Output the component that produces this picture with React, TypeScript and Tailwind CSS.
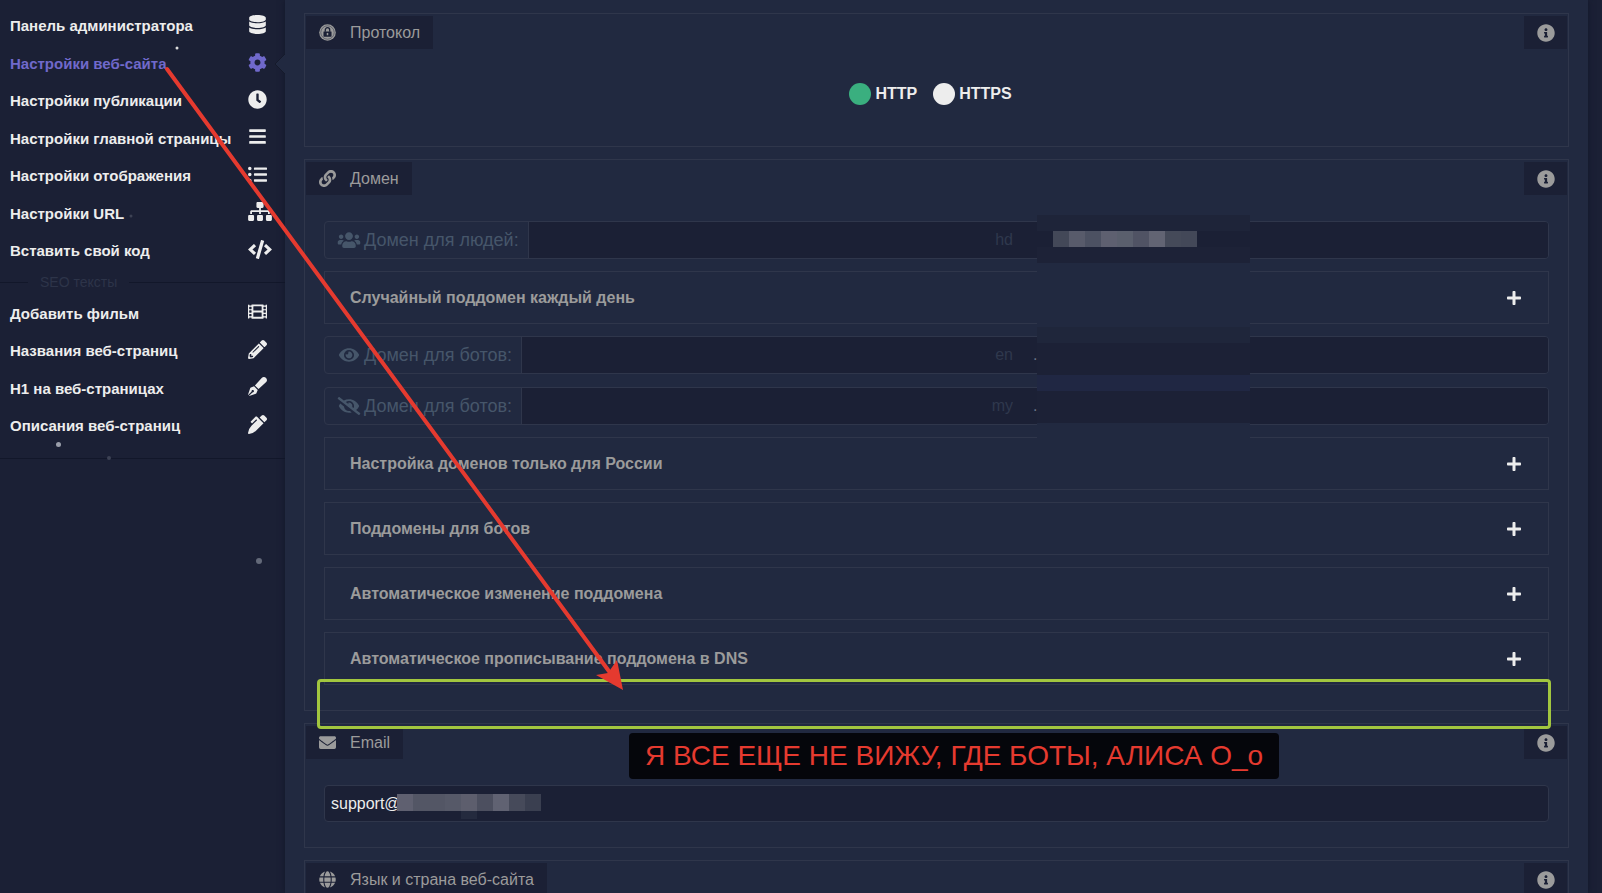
import React, { ReactNode } from "react";
import type { IconType } from "react-icons";
import {
  FaBars,
  FaClock,
  FaCode,
  FaCog,
  FaDatabase,
  FaEnvelope,
  FaEye,
  FaEyeSlash,
  FaFilm,
  FaGlobe,
  FaInfoCircle,
  FaLink,
  FaListUl,
  FaPenAlt,
  FaPenFancy,
  FaPencilAlt,
  FaPlus,
  FaSitemap,
  FaUsers,
} from "react-icons/fa";

type Item = { label: string; icon: IconType; wide?: boolean; active?: boolean };

const mainItems: Item[] = [
  { label: "Панель администратора", icon: FaDatabase },
  { label: "Настройки веб-сайта", icon: FaCog, active: true },
  { label: "Настройки публикации", icon: FaClock },
  { label: "Настройки главной страницы", icon: FaBars },
  { label: "Настройки отображения", icon: FaListUl },
  { label: "Настройки URL", icon: FaSitemap, wide: true },
  { label: "Вставить свой код", icon: FaCode, wide: true },
];

const seoItems: Item[] = [
  { label: "Добавить фильм", icon: FaFilm },
  { label: "Названия веб-страниц", icon: FaPencilAlt },
  { label: "H1 на веб-страницах", icon: FaPenFancy },
  { label: "Описания веб-страниц", icon: FaPenAlt },
];

function NavItem({ label, icon: Icon, wide, active }: Item) {
  return (
    <a
      href="#"
      className={`relative flex flex-1 items-center justify-between pl-[10px] pr-[13px] text-[15px] font-bold whitespace-nowrap ${
        active ? "text-[#7069cb]" : "text-[#ededed]"
      }`}
    >
      <span>{label}</span>
      <span className="mb-1 flex w-6 text-[19px]">
        <Icon className={wide ? "h-[19px] w-6" : "size-[19px]"} />
      </span>
      {active && (
        <svg className="absolute right-0 top-1/2 -mt-[10px] h-5 w-[10px]" viewBox="0 0 10 20">
          <path d="M10 0 0 10l10 10z" fill="#212940" />
          <path d="M10 0 0 10l10 10" fill="none" stroke="#151a2b" />
        </svg>
      )}
    </a>
  );
}

function LockBadge({ className }: { className?: string }) {
  return (
    <svg className={className} viewBox="0 0 16 16" fill="none">
      <circle cx="8" cy="8" r="7.8" fill="currentColor" />
      <circle cx="8" cy="8" r="6.3" stroke="#1b2035" strokeWidth=".4" />
      <path d="M5.9 7.2V5.6a2.1 2.1 0 0 1 4.2 0v1.6" stroke="#1b2035" strokeWidth="1.2" />
      <rect x="4.2" y="7" width="7.6" height="5" rx=".4" fill="#1b2035" />
      <path d="M8 8.4v2.2" stroke="currentColor" strokeWidth="1.4" />
    </svg>
  );
}

function Section({
  title,
  icon: Icon,
  children,
}: {
  title: string;
  icon: IconType | typeof LockBadge;
  children?: ReactNode;
}) {
  return (
    <section className="border border-[#2f364b] px-[1px] pt-[2px] pb-[25px]">
      <header className="flex h-[33px] justify-between text-[#9b9b9b]">
        <h2 className="flex items-center gap-[14px] bg-[#1b2035] pl-[13px] pr-[13px] text-[16px]">
          <Icon className="size-[17px]" />
          {title}
        </h2>
        <button type="button" aria-label="Информация" className="flex w-[43px] items-center justify-center bg-[#1b2035]">
          <FaInfoCircle className="size-[18px]" />
        </button>
      </header>
      <div className="px-[18px] pt-[26px]">{children}</div>
    </section>
  );
}

function DomainRow({ id, label, icon: Icon, prefix, dot }: { id: string; label: string; icon: IconType; prefix: string; dot?: boolean }) {
  return (
    <div className="flex h-[38px] overflow-hidden rounded-[4px] border border-[#2f364b]">
      <label htmlFor={id} className="flex items-center gap-[3px] border-r border-[#2f364b] pl-3 pr-[9px] text-[18px] whitespace-nowrap text-[#46566a]">
        <Icon className="h-[18px] w-6" />
        {label}
      </label>
      <div className="flex flex-1 items-center bg-[#1b2035] text-[16px] text-[#2f384d]">
        <input id={id} defaultValue={prefix} className="h-full min-w-0 flex-1 bg-transparent pr-5 text-right outline-none" />
        <span className="w-[515px] text-[#6b7385]">{dot ? "." : ""}</span>
      </div>
    </div>
  );
}

function Accordion({ title }: { title: string }) {
  return (
    <button type="button" className="flex h-[53px] w-full items-center justify-between border border-[#2f364b] pl-[25px] pr-[26px] text-left text-[16px] font-bold text-[#9b9b9b]">
      {title}
      <FaPlus className="size-4 text-[#ededed]" />
    </button>
  );
}

const domainMosaic = ["bg-[#434858]", "bg-[#585b6b]", "bg-[#4c5162]", "bg-[#5e6070]", "bg-[#5a5f6d]", "bg-[#505364]", "bg-[#626473]", "bg-[#454a59]", "bg-[#434858]"];
const emailMosaic = ["bg-[#5f6070]", "bg-[#535665]", "bg-[#535665]", "bg-[#565968]", "bg-[#5d5e6d]", "bg-[#4c4f5f]", "bg-[#606272]", "bg-[#464a5a]", "bg-[#3a3f50]"];

export default function App() {
  return (
    <div className="relative flex h-screen overflow-hidden bg-[#1b2035] font-['Liberation_Sans',Arial,sans-serif]">
      <aside className="w-[285px] shrink-0">
        <nav className="border-b border-[#12172a] pt-2 pb-[13px]">
          <div className="flex h-[262px] flex-col">
            {mainItems.map((i) => (
              <NavItem key={i.label} {...i} />
            ))}
          </div>
          <div className="flex h-[25px] items-center text-[14px] text-[#2d3449]">
            <span className="h-px w-7 bg-[#12172a]" />
            <span className="px-3">SEO тексты</span>
            <span className="h-px flex-1 bg-[#12172a]" />
          </div>
          <div className="flex h-[150px] flex-col">
            {seoItems.map((i) => (
              <NavItem key={i.label} {...i} />
            ))}
          </div>
        </nav>
      </aside>

      <main className="mr-[14px] flex flex-1 flex-col gap-3 bg-[#212940] pt-[13px] pr-[19px] pl-[19px] shadow-[0_0_6px_#12172a]">
        <Section title="Протокол" icon={LockBadge}>
          <div className="mb-2 flex h-[38px] items-center justify-center gap-4 pr-3 text-[16px] font-bold text-[#ededed]">
            <label className="flex items-center gap-1">
              <input type="radio" name="protocol" defaultChecked className="size-[22px] appearance-none rounded-full bg-[#ededed] checked:bg-[#3aaf7f]" />
              HTTP
            </label>
            <label className="flex items-center gap-1">
              <input type="radio" name="protocol" className="size-[22px] appearance-none rounded-full bg-[#ededed] checked:bg-[#3aaf7f]" />
              HTTPS
            </label>
          </div>
        </Section>

        <Section title="Домен" icon={FaLink}>
          <div className="relative flex flex-col gap-3">
            <DomainRow id="people" label="Домен для людей:" icon={FaUsers} prefix="hd" />
            <Accordion title="Случайный поддомен каждый день" />
            <div className="flex flex-col gap-[13px]">
              <DomainRow id="bots-open" label="Домен для ботов:" icon={FaEye} prefix="en" dot />
              <DomainRow id="bots-hidden" label="Домен для ботов:" icon={FaEyeSlash} prefix="my" dot />
            </div>
            <Accordion title="Настройка доменов только для России" />
            <Accordion title="Поддомены для ботов" />
            <Accordion title="Автоматическое изменение поддомена" />
            <Accordion title="Автоматическое прописывание поддомена в DNS" />
            <div className="absolute -top-[6px] right-[299px] w-[213px]">
              <div className="h-4 bg-[#1e2439]" />
              <div className="flex h-4 bg-[#1b2035] pl-4">
                {domainMosaic.map((c, i) => (
                  <span key={i} className={`w-4 ${c}`} />
                ))}
              </div>
              <div className="h-4 bg-[#1d2237]" />
              <div className="h-16 bg-[#212940]" />
              <div className="h-4 bg-[#1f263b]" />
              <div className="h-8 bg-[#1c2136]" />
              <div className="h-4 bg-[#202743]" />
              <div className="h-8 bg-[#1c2136]" />
              <div className="h-4 bg-[#212940]" />
            </div>
          </div>
        </Section>

        <Section title="Email" icon={FaEnvelope}>
          <div className="relative">
            <input aria-label="Email" defaultValue="support@" className="block h-[37px] w-full rounded-[4px] border border-[#2f364b] bg-[#1b2035] px-[6px] text-[16px] text-[#ededed] outline-none" />
            <div className="absolute top-[9px] left-[73px] flex h-[17px]">
              {emailMosaic.map((c, i) => (
                <span key={i} className={`w-4 ${c}`} />
              ))}
            </div>
            <div className="absolute top-[26px] left-[137px] h-2 w-4 bg-[#242a3e]" />
          </div>
        </Section>

        <Section title="Язык и страна веб-сайта" icon={FaGlobe} />
      </main>

      <div className="pointer-events-none absolute top-[679px] right-[51px] left-[317px] h-[50px] rounded-[4px] border-[3px] border-[#a2c63f]" />
      <svg className="pointer-events-none absolute top-0 left-0 h-[893px] w-[640px]" viewBox="0 0 640 893">
        <path d="M167 69 611 674" stroke="#e53a2f" strokeWidth="4" strokeLinecap="round" />
        <path d="M623 690 596 675 608 673 617 660z" fill="#e53a2f" />
        <g fill="#9a9eaa">
          <circle cx="177" cy="48" r="1.5" fill="#dddddd" />
          <circle cx="58.5" cy="444.5" r="2.5" />
          <circle cx="109" cy="458" r="2" fill="#3d4254" />
          <circle cx="259" cy="561" r="3" fill="#636979" />
          <circle cx="131" cy="216" r="1.5" fill="#3d4254" />
        </g>
      </svg>
      <p className="absolute top-[733px] left-[629px] flex h-[46px] items-center rounded-[4px] bg-[#05060b] px-4 text-[28px] whitespace-nowrap text-[#e53a2f]">
        Я ВСЕ ЕЩЕ НЕ ВИЖУ, ГДЕ БОТЫ, АЛИСА О_о
      </p>
    </div>
  );
}
